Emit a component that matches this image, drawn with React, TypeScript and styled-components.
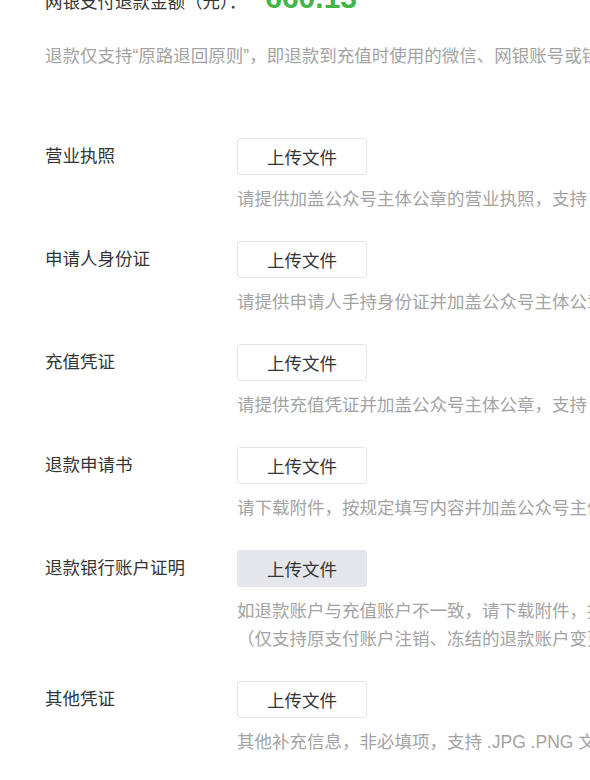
import React from 'react'

import styled, { createGlobalStyle } from 'styled-components'

const GlobalStyle = createGlobalStyle`
  html, body {
    margin: 0;
    padding: 0;
    background: #ffffff;
    overflow: hidden;
  }

  body {
    font-family: "Liberation Sans", "Noto Sans CJK SC", sans-serif;
    color: #353535;
  }
`

const Page = styled.div`
  margin-top: -22px;
  padding-left: 45px;
  width: 900px;
`

// AMOUNT

const AmountRow = styled.div`
  height: 40px;
  line-height: 40px;
  white-space: nowrap;
`

const AmountLabel = styled.span`
  font-size: 17.5px;
  color: #353535;
`

const AmountValue = styled.span`
  margin-left: 19px;
  font-size: 30px;
  font-weight: bold;
  color: #44b549;
`

const Notice = styled.div`
  margin-top: 25px;
  font-size: 17.5px;
  line-height: 26px;
  color: #a3a3a3;
  white-space: nowrap;
`

// FORM

const Form = styled.div`
  display: flex;
  flex-direction: column;
  gap: 29px;
  margin-top: 69px;
`

const Field = styled.div`
  display: grid;
  grid-template-columns: 192px auto;
`

const FieldLabel = styled.div`
  font-size: 17.5px;
  line-height: 37px;
  color: #353535;
`

const FieldControl = styled.div`
  display: flex;
  flex-direction: column;
  align-items: flex-start;
`

const UploadButton = styled.button<{ $active?: boolean }>`
  box-sizing: border-box;
  width: 130px;
  height: 37px;
  padding: 0;
  border: 1px solid ${(p) => (p.$active ? '#e4e5ea' : '#e4e6ea')};
  border-radius: 3px;
  background-color: ${(p) => (p.$active ? '#e5e6eb' : '#ffffff')};
  font-family: inherit;
  font-size: 17.5px;
  color: #353535;
  cursor: pointer;

  &:hover {
    background-color: #e5e6eb;
  }
`

const Hint = styled.div`
  margin-top: 11px;
  font-size: 17.5px;
  line-height: 26px;
  color: #a3a3a3;
  white-space: nowrap;
`

const HintLine = styled.div`
  & + & {
    margin-top: 2px;
  }
`

const fields = [
  {
    label: '营业执照',
    hint: ['请提供加盖公众号主体公章的营业执照，支持 .JPG .PNG 文件格式'],
  },
  {
    label: '申请人身份证',
    hint: ['请提供申请人手持身份证并加盖公众号主体公章的照片，支持 .JPG .PNG 文件格式'],
  },
  {
    label: '充值凭证',
    hint: ['请提供充值凭证并加盖公众号主体公章，支持 .JPG .PNG 文件格式'],
  },
  {
    label: '退款申请书',
    hint: ['请下载附件，按规定填写内容并加盖公众号主体公章，支持 .JPG .PNG 文件格式'],
  },
  {
    label: '退款银行账户证明',
    active: true,
    hint: [
      '如退款账户与充值账户不一致，请下载附件，按规定填写内容并加盖公众号主体公章',
      '（仅支持原支付账户注销、冻结的退款账户变更）',
    ],
  },
  {
    label: '其他凭证',
    hint: ['其他补充信息，非必填项，支持 .JPG .PNG 文件格式'],
  },
]

export default function App(): JSX.Element {
  return (
    <>
      <GlobalStyle />
      <Page>
        <AmountRow>
          <AmountLabel>网银支付退款金额（元）：</AmountLabel>
          <AmountValue>660.13</AmountValue>
        </AmountRow>
        <Notice>
          退款仅支持“原路退回原则”，即退款到充值时使用的微信、网银账号或银行卡，请确保账户可正常使用
        </Notice>
        <Form>
          {fields.map((f) => (
            <Field key={f.label}>
              <FieldLabel>{f.label}</FieldLabel>
              <FieldControl>
                <UploadButton $active={f.active}>上传文件</UploadButton>
                <Hint>
                  {f.hint.map((line, i) => (
                    <HintLine key={i}>{line}</HintLine>
                  ))}
                </Hint>
              </FieldControl>
            </Field>
          ))}
        </Form>
      </Page>
    </>
  )
}
